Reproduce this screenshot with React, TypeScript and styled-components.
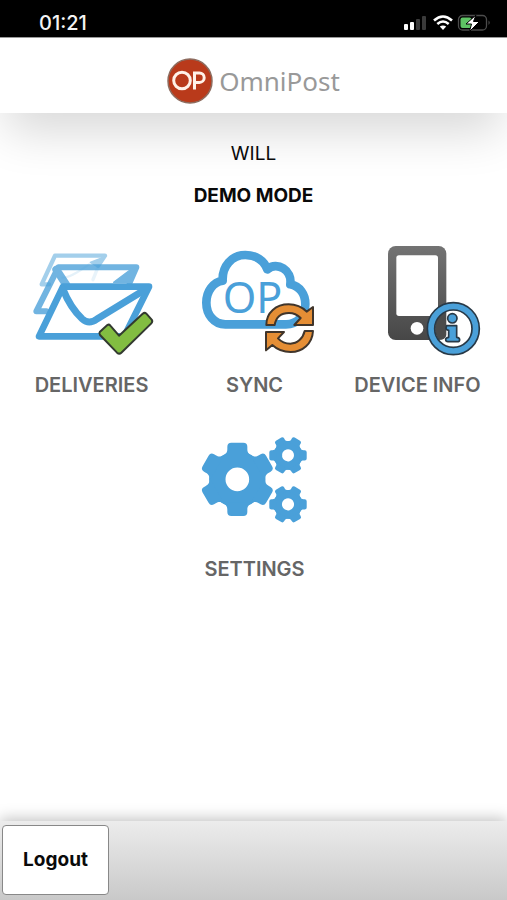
import React from "react";
import styled, { createGlobalStyle } from "styled-components";

const BLUE = "#4aa0d9";

const GlobalStyle = createGlobalStyle`
  * { box-sizing: border-box; }
  body {
    margin: 0;
    background: #fff;
    color: #0a0a0a;
    font-family: Inter, "Liberation Sans", sans-serif;
  }
`;

const Page = styled.div`
  display: flex;
  flex-direction: column;
  min-height: 100vh;
`;

const StatusBar = styled.div`
  display: flex;
  align-items: center;
  justify-content: space-between;
  height: 37px;
  padding: 8px 16px 0 39px;
  background: #000;
  color: #f4f4f4;
`;

const Clock = styled.time`
  font-size: 20px;
  line-height: 24px;
  font-weight: 500;
`;

const StatusIcons = styled.svg`
  width: 88px;
  height: 18px;
`;

const Header = styled.header`
  display: flex;
  align-items: center;
  justify-content: center;
  gap: 6px;
  height: 76px;
  padding-top: 10px;
  border-top: 1px solid #999;
  background: #fff;
  box-shadow: 0 24px 48px -6px rgba(0, 0, 0, 0.16);
`;

const LogoMark = styled.svg`
  width: 46px;
  height: 46px;
`;

const LogoName = styled.span`
  color: #999;
  font-family: "Noto Sans", "Open Sans", sans-serif;
  font-size: 26px;
  line-height: 32px;
`;

const Main = styled.main`
  position: relative;
  flex: 1;
  display: flex;
  flex-direction: column;
  align-items: center;
  padding-top: 29px;
`;

const UserLine = styled.p<{ $strong?: boolean }>`
  margin: 0 0 18px;
  font-size: 19px;
  line-height: 24px;
  font-weight: ${(p) => (p.$strong ? 700 : 400)};
`;

const Menu = styled.nav`
  display: flex;
  flex-wrap: wrap;
  justify-content: center;
  row-gap: 27px;
  width: 100%;
  padding: 14px 8px 0 10px;
`;

const Tile = styled.button`
  display: flex;
  flex-direction: column;
  align-items: center;
  gap: 13px;
  width: calc(100% / 3);
  padding: 0;
  border: 0;
  background: none;
  color: #666;
  font-family: inherit;
  font-size: 20px;
  line-height: 24px;
  font-weight: 600;
  white-space: nowrap;
  cursor: pointer;
`;

const TileIcon = styled.svg`
  width: 128px;
  height: 120px;
`;

const Footer = styled.footer`
  display: flex;
  height: 79px;
  padding: 4px 2px 5px;
  background: linear-gradient(#ececec, #c9c9c9);
  box-shadow: 0 -2px 14px rgba(0, 0, 0, 0.25);
`;

const LogoutButton = styled.button`
  width: 107px;
  border: 1px solid #888;
  border-radius: 4px;
  background: #fff;
  color: #0a0a0a;
  font-family: inherit;
  font-size: 19px;
  line-height: 24px;
  font-weight: 700;
  cursor: pointer;
`;

function DeliveriesIcon() {
  return (
    <TileIcon viewBox="21 15 384 360" aria-hidden="true">
      <g stroke={BLUE} strokeLinejoin="round" strokeLinecap="round">
        <g opacity=".5">
          <path d="M84 148H62L102 62H252L232 92" fill="none" strokeWidth="13" />
          <path d="M248 66 208 82 230 96Z" fill={BLUE} strokeWidth="4" />
        </g>
        <path d="M232 94 216 134" strokeWidth="10" opacity=".12" />
        <path d="M124 128Q150 128 204 88" fill="none" strokeWidth="7" opacity=".15" />
        <g opacity=".78">
          <path d="M76 229H46L112 97H346L326 143" fill="none" strokeWidth="18" />
          <path d="M328 104 278 142H326L346 98Z" fill={BLUE} strokeWidth="4" />
          <path d="M106 104 136 150" strokeWidth="24" />
        </g>
        <path d="M54 304 126 155H384L310 304Z" fill="#fff" strokeWidth="20" />
        <path d="M126 163Q148 218 184 252Q204 270 228 252L374 163" fill="none" strokeWidth="21" />
      </g>
      <path
        d="M237 290 259 270Q264 267 268 272L294 302 365 236Q371 231 376 236L392 254Q396 260 391 265L301 353Q295 359 288 353L237 300Q233 295 237 290Z"
        fill="#82bd41"
        stroke="#333a30"
        strokeWidth="6"
        strokeLinejoin="round"
      />
    </TileIcon>
  );
}

function SyncIcon() {
  return (
    <TileIcon viewBox="0 15 384 360" aria-hidden="true">
      <path
        d="M106 268C72 268 49 238 49 203C49 168 70 141 98 137C96 93 126 60 166 60C198 60 222 77 232 103C262 78 307 106 301 148C330 154 346 178 346 207C346 242 322 268 288 268Z"
        fill="#fff"
        stroke={BLUE}
        strokeWidth="26"
        strokeLinejoin="round"
      />
      <text x="98" y="233" fill={BLUE} fontFamily="'Noto Sans', 'Open Sans', sans-serif" fontWeight="400" fontSize="129">
        OP
      </text>
      <g fill="#e58e35" stroke="#40352b" strokeWidth="6" strokeLinejoin="round">
        <path d="M229 270C229 233 258 208 296 208C318 208 336 216 350 230L369 216V270H313L332 249C322 239 311 234 297 234C274 234 258 247 254 270Z" />
        <path d="M369 288C367 326 338 351 302 351C280 351 262 344 247 330L228 346V291H282L264 310C274 321 286 326 301 326C322 326 339 310 344 288Z" />
      </g>
    </TileIcon>
  );
}

function DeviceIcon() {
  return (
    <TileIcon viewBox="25 15 384 360" aria-hidden="true">
      <defs>
        <linearGradient id="device-body" x1="0" y1="0" x2="0" y2="1">
          <stop offset="0" stopColor="#737373" />
          <stop offset="1" stopColor="#474747" />
        </linearGradient>
      </defs>
      <rect x="130" y="33" width="175" height="282" rx="23" fill="url(#device-body)" />
      <rect x="155" y="61" width="125" height="182" rx="8" fill="#fff" />
      <circle cx="217" cy="280" r="19" fill="#fff" />
      <circle cx="326" cy="281" r="66" fill="#fff" />
      <path d="M287 229 305 220V300Q303 315 282 315Q258 281 287 229Z" fill="#4b4b4b" />
      <circle cx="326" cy="281" r="67" fill="none" stroke="#283947" strokeWidth="27" />
      <circle cx="326" cy="281" r="67" fill="none" stroke={BLUE} strokeWidth="17" />
      <g fill={BLUE} stroke="#283947" strokeWidth="5" strokeLinejoin="round">
        <circle cx="323" cy="250" r="14" />
        <path d="M306 272H336V307Q345 308 345 314Q345 320 337 320H310Q303 320 303 313Q303 308 312 307V286Q304 285 304 279Z" />
      </g>
    </TileIcon>
  );
}

function Gear({ x, y, scale, turn }: { x: number; y: number; scale: number; turn: number }) {
  return (
    <g transform={`translate(${x} ${y}) scale(${scale}) rotate(${turn})`}>
      <circle r="60" fill="none" stroke={BLUE} strokeWidth="49" />
      {[0, 60, 120, 180, 240, 300].map((angle) => (
        <path
          key={angle}
          transform={`rotate(${angle})`}
          d="M-44 -70C-32 -78 -30 -82 -30 -92V-98Q-30 -110 -18 -110H18Q30 -110 30 -98V-92C30 -82 32 -78 44 -70Z"
          fill={BLUE}
        />
      ))}
    </g>
  );
}

function SettingsIcon() {
  return (
    <TileIcon viewBox="0 -3 384 360" aria-hidden="true">
      <Gear x={142} y={163} scale={1} turn={0} />
      <Gear x={294} y={91} scale={0.51} turn={30} />
      <Gear x={294} y={238} scale={0.51} turn={30} />
    </TileIcon>
  );
}

const tiles = [
  { label: "DELIVERIES", Icon: DeliveriesIcon },
  { label: "SYNC", Icon: SyncIcon },
  { label: "DEVICE INFO", Icon: DeviceIcon },
  { label: "SETTINGS", Icon: SettingsIcon },
];

export default function App() {
  return (
    <Page>
      <GlobalStyle />
      <StatusBar>
        <Clock>01:21</Clock>
        <StatusIcons viewBox="0 0 88 18" aria-hidden="true">
          <g fill="#fff">
            <rect x="1" y="10" width="4" height="6" rx="1" />
            <rect x="7" y="8" width="4" height="8" rx="1" />
          </g>
          <g fill="#3b3b3b">
            <rect x="13" y="5" width="4" height="11" rx="1" />
            <rect x="19" y="2" width="4" height="14" rx="1" />
          </g>
          <g fill="none" stroke="#fff" strokeWidth="2.6">
            <path d="M31 6.500Q40 -1.500 49 6.500" />
            <path d="M34.300 10Q40 5 45.700 10" />
          </g>
          <path d="M36.800 12.600Q40 10.200 43.200 12.600L40 16Z" fill="#fff" />
          <rect x="55.500" y="1.500" width="28" height="14.500" rx="4" fill="none" stroke="#4c4c4c" strokeWidth="1.300" />
          <path d="M85.500 6.500Q88 8.700 85.500 11Z" fill="#4c4c4c" />
          <rect x="57.500" y="3.500" width="11" height="10.500" rx="2" fill="#5fc465" />
          <path d="M73 1 63 10H68.500L66.500 17.500 76.500 7.500H70.500Z" fill="#fff" stroke="#000" strokeWidth="1" />
        </StatusIcons>
      </StatusBar>
      <Header>
        <LogoMark viewBox="0 0 46 46" aria-hidden="true">
          <circle cx="23" cy="23" r="22" fill="#b93a1b" stroke="#8d6c5f" strokeWidth="1.500" />
          <g fill="none" stroke="#fff1e8" strokeWidth="3">
            <circle cx="15" cy="22.500" r="8.300" />
            <path d="M27.500 31.500V15H32.500A4.700 4.700 0 0 1 32.500 24.400H28" />
          </g>
        </LogoMark>
        <LogoName>OmniPost</LogoName>
      </Header>
      <Main>
        <UserLine>WILL</UserLine>
        <UserLine $strong>DEMO MODE</UserLine>
        <Menu>
          {tiles.map(({ label, Icon }) => (
            <Tile key={label} type="button">
              <Icon />
              {label}
            </Tile>
          ))}
        </Menu>
      </Main>
      <Footer>
        <LogoutButton type="button">Logout</LogoutButton>
      </Footer>
    </Page>
  );
}
